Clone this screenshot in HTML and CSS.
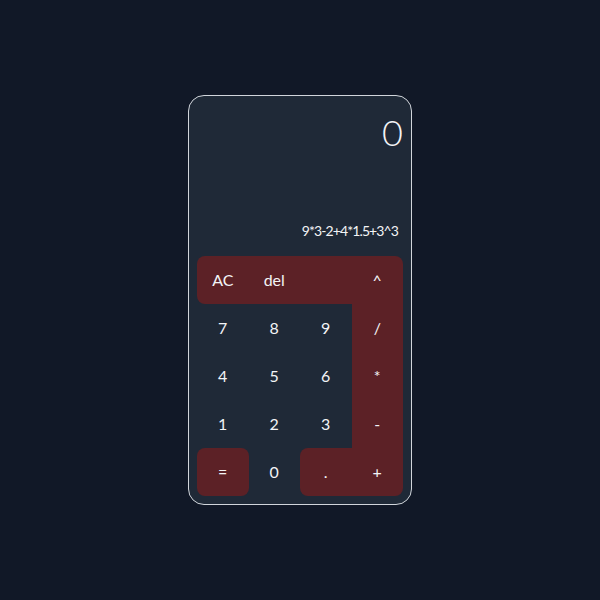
FILE: index.html
```html
<!DOCTYPE html>
<html>
<head>
<meta charset="utf-8">
<link rel="stylesheet" href="styles.css">
</head>
<body>
<div class="calc">
  <div class="display">
    <div class="result">0</div>
    <div class="expr">9*3-2+4*1.5+3^3</div>
  </div>
  <div class="keys">
    <div class="key op r-l">AC</div>
    <div class="key op">del</div>
    <div class="key op"></div>
    <div class="key op r-tr">^</div>
    <div class="key">7</div>
    <div class="key">8</div>
    <div class="key">9</div>
    <div class="key op">/</div>
    <div class="key">4</div>
    <div class="key">5</div>
    <div class="key">6</div>
    <div class="key op">*</div>
    <div class="key">1</div>
    <div class="key">2</div>
    <div class="key">3</div>
    <div class="key op">-</div>
    <div class="key op r-all">=</div>
    <div class="key">0</div>
    <div class="key op r-l">.</div>
    <div class="key op r-br">+</div>
  </div>
</div>
</body>
</html>
```
FILE: styles.css
```css
* { box-sizing: border-box; }
html, body { margin: 0; height: 100%; }
body {
  background: #111827;
  display: flex;
  align-items: center;
  justify-content: center;
  font-family: "Lato", "Noto Sans", sans-serif;
  color: #f3f4f6;
}
.calc {
  width: 224px;
  height: 410px;
  background: #1f2937;
  border: 1px solid #d1d5db;
  border-radius: 16px;
  padding: 8px;
  display: flex;
  flex-direction: column;
}
.display {
  flex: 1;
  display: flex;
  flex-direction: column;
  justify-content: space-between;
  align-items: flex-end;
  padding: 10px 0 17px 4px;
}
.result {
  font-size: 36px;
  font-weight: 300;
  line-height: 36px;
}
.expr {
  font-size: 14px;
  line-height: 16px;
  letter-spacing: -0.9px;
  padding-right: 5px;
}
.keys {
  display: grid;
  grid-template-columns: repeat(4, 1fr);
  grid-auto-rows: 48px;
}
.key {
  display: flex;
  align-items: center;
  justify-content: center;
  font-size: 16px;
  padding-bottom: 1px;
}
.op { background: #5c2126; }
.r-l { border-radius: 8px 0 0 8px; }
.r-tr { border-radius: 0 8px 0 0; }
.r-br { border-radius: 0 0 8px 0; }
.r-all { border-radius: 8px; }
```
